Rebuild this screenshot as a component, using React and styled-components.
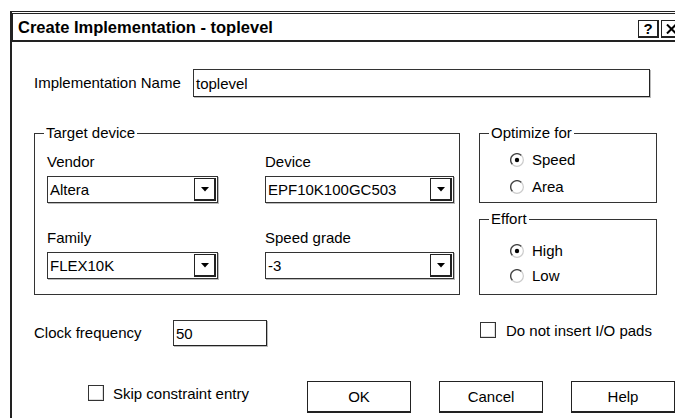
import React from "react";
import styled, { createGlobalStyle } from "styled-components";

const GlobalStyle = createGlobalStyle`
  html, body {
    margin: 0;
    padding: 0;
    background: #fff;
    overflow: hidden;
  }
  body {
    font-family: "Liberation Sans", Arial, sans-serif;
    font-size: 15px;
    color: #000;
  }
`;

const Screen = styled.div`
  width: 675px;
  height: 418px;
  box-sizing: border-box;
  padding: 11px 0 0 10px;
  overflow: hidden;
`;

const Window = styled.div`
  width: 674px;
  min-height: 420px;
  border-top: 1px solid #222;
  border-left: 2px solid #222;
  background: #fff;
`;

const TitleBar = styled.div`
  margin-top: 1px;
  height: 26px;
  display: flex;
  align-items: center;
  padding: 0 4px 0 5px;
  border-top: 1px solid #222;
  border-left: 1px solid #222;
  border-bottom: 2px solid #222;
`;

const Caption = styled.div`
  flex: 1;
  font-weight: bold;
  font-size: 16.5px;
  line-height: 20px;
  white-space: nowrap;
`;

const CaptionButtons = styled.div`
  display: flex;
  gap: 2px;
  align-self: flex-end;
  margin-bottom: 2px;
`;

const CaptionButton = styled.div`
  width: 21px;
  height: 18px;
  box-sizing: border-box;
  display: flex;
  align-items: center;
  justify-content: center;
  border: 1px solid #222;
  border-right-width: 2px;
  border-bottom-width: 2px;
  font-weight: bold;
  font-size: 15px;
  line-height: 1;
`;

const Body = styled.div`
  padding: 27px 0 0 22px;
`;

const NameRow = styled.div`
  display: flex;
  align-items: center;
`;

const Label = styled.div`
  width: ${(p) => p.$width}px;
  flex: none;
  line-height: 18px;
  white-space: nowrap;
`;

const TextBox = styled.div`
  width: ${(p) => p.$width}px;
  height: ${(p) => p.$height}px;
  box-sizing: border-box;
  display: flex;
  align-items: center;
  padding-left: 2px;
  border: 1px solid #333;
  border-right-color: #222;
  border-bottom-color: #222;
  box-shadow: 1px 1px 0 #bbb;
`;

const GroupsRow = styled.div`
  display: flex;
  gap: 19px;
  margin-top: 27px;
`;

const Group = styled.fieldset`
  margin: 0;
  padding: 0;
  min-width: 0;
  width: ${(p) => p.$width}px;
  box-sizing: border-box;
  border: 1px solid #333;
`;

const GroupTitle = styled.legend`
  margin-left: 9px;
  padding: 0 2px;
  font-size: 15px;
  line-height: 18px;
`;

const DeviceGrid = styled.div`
  display: grid;
  grid-template-columns: 171px 189px;
  column-gap: 47px;
  row-gap: 26px;
  padding: 11px 5px 15px 12px;
`;

const Field = styled.div`
  display: flex;
  flex-direction: column;
  gap: 5px;
`;

const Select = styled.div`
  height: 27px;
  box-sizing: border-box;
  display: flex;
  align-items: center;
  padding: 0 1px 0 2px;
  border: 1px solid #333;
  box-shadow: 1px 1px 0 #bbb;
`;

const SelectValue = styled.span`
  flex: 1;
  white-space: nowrap;
`;

const DropButton = styled.div`
  width: 22px;
  height: 23px;
  box-sizing: border-box;
  display: flex;
  align-items: center;
  justify-content: center;
  border: 1px solid #222;
  border-right-width: 2px;
  border-bottom-width: 2px;
`;

const RightStack = styled.div`
  display: flex;
  flex-direction: column;
  gap: 7px;
`;

const RadioList = styled.div`
  display: flex;
  flex-direction: column;
  gap: ${(p) => p.$gap}px;
  padding: ${(p) => p.$top}px 0 ${(p) => p.$bottom}px 30px;
`;

const Option = styled.label`
  display: flex;
  align-items: center;
  gap: 8px;
  height: 18px;
  line-height: 18px;
`;

const OptionsRow = styled.div`
  display: flex;
  align-items: flex-start;
  margin-top: 25px;
`;

const ClockField = styled.div`
  width: 446px;
  display: flex;
  align-items: center;
`;

const Check = styled.label`
  display: flex;
  align-items: center;
  gap: ${(p) => p.$gap}px;
  height: 18px;
  margin-top: ${(p) => p.$offset}px;
  white-space: nowrap;
`;

const CheckBox = styled.span`
  width: 16px;
  height: 16px;
  box-sizing: border-box;
  border: 1px solid #333;
  box-shadow: inset -1px -1px 0 #ddd;
`;

const ButtonRow = styled.div`
  display: flex;
  align-items: flex-start;
  margin-top: 35px;
  padding-left: 54px;
`;

const SkipSlot = styled.div`
  width: 219px;
  flex: none;
`;

const Buttons = styled.div`
  display: flex;
  gap: 28px;
`;

const Button = styled.div`
  width: 104px;
  height: 32px;
  box-sizing: border-box;
  display: flex;
  align-items: center;
  justify-content: center;
  border: 1px solid #222;
  border-bottom-width: 2px;
`;

const DownArrow = () => (
  <svg width="8" height="5" viewBox="0 0 8 5">
    <polygon points="0,0 8,0 4,4.5" fill="#000" />
  </svg>
);

const CloseGlyph = () => (
  <svg width="11" height="10" viewBox="0 0 11 10">
    <path d="M1 0.5 L10 9.5 M10 0.5 L1 9.5" stroke="#000" strokeWidth="2" />
  </svg>
);

const RadioDot = ({ checked }) => (
  <svg width="14" height="14" viewBox="0 0 14 14">
    <circle cx="7" cy="7" r="6.3" fill="#fff" />
    <path d="M11.5 2.5 A6.3 6.3 0 0 0 2.5 11.5" fill="none" stroke="#444" strokeWidth="1.4" />
    <path d="M2.5 11.5 A6.3 6.3 0 0 0 11.5 2.5" fill="none" stroke="#ccc" strokeWidth="1.2" />
    {checked && <circle cx="7" cy="7" r="2.2" fill="#000" />}
  </svg>
);

const Combo = ({ label, value }) => (
  <Field>
    <Label>{label}</Label>
    <Select>
      <SelectValue>{value}</SelectValue>
      <DropButton>
        <DownArrow />
      </DropButton>
    </Select>
  </Field>
);

const RadioGroup = ({ title, options, top, gap, bottom }) => (
  <Group $width={178}>
    <GroupTitle>{title}</GroupTitle>
    <RadioList $top={top} $gap={gap} $bottom={bottom}>
      {options.map((o, i) => (
        <Option key={o}>
          <RadioDot checked={i === 0} />
          {o}
        </Option>
      ))}
    </RadioList>
  </Group>
);

export default function App() {
  return (
    <Screen>
      <GlobalStyle />
      <Window>
        <TitleBar>
          <Caption>Create Implementation - toplevel</Caption>
          <CaptionButtons>
            <CaptionButton>?</CaptionButton>
            <CaptionButton>
              <CloseGlyph />
            </CaptionButton>
          </CaptionButtons>
        </TitleBar>

        <Body>
          <NameRow>
            <Label $width={159}>Implementation Name</Label>
            <TextBox $width={457} $height={28}>toplevel</TextBox>
          </NameRow>

          <GroupsRow>
            <Group $width={426}>
              <GroupTitle>Target device</GroupTitle>
              <DeviceGrid>
                <Combo label="Vendor" value="Altera" />
                <Combo label="Device" value="EPF10K100GC503" />
                <Combo label="Family" value="FLEX10K" />
                <Combo label="Speed grade" value="-3" />
              </DeviceGrid>
            </Group>
            <RightStack>
              <RadioGroup title="Optimize for" options={["Speed", "Area"]} top={9} gap={9} bottom={6} />
              <RadioGroup title="Effort" options={["High", "Low"]} top={14} gap={7} bottom={9} />
            </RightStack>
          </GroupsRow>

          <OptionsRow>
            <ClockField>
              <Label $width={139}>Clock frequency</Label>
              <TextBox $width={94} $height={26}>50</TextBox>
            </ClockField>
            <Check $gap={10} $offset={1}>
              <CheckBox />
              Do not insert I/O pads
            </Check>
          </OptionsRow>

          <ButtonRow>
            <SkipSlot>
              <Check $gap={9} $offset={3}>
                <CheckBox />
                Skip constraint entry
              </Check>
            </SkipSlot>
            <Buttons>
              <Button>OK</Button>
              <Button>Cancel</Button>
              <Button>Help</Button>
            </Buttons>
          </ButtonRow>
        </Body>
      </Window>
    </Screen>
  );
}
